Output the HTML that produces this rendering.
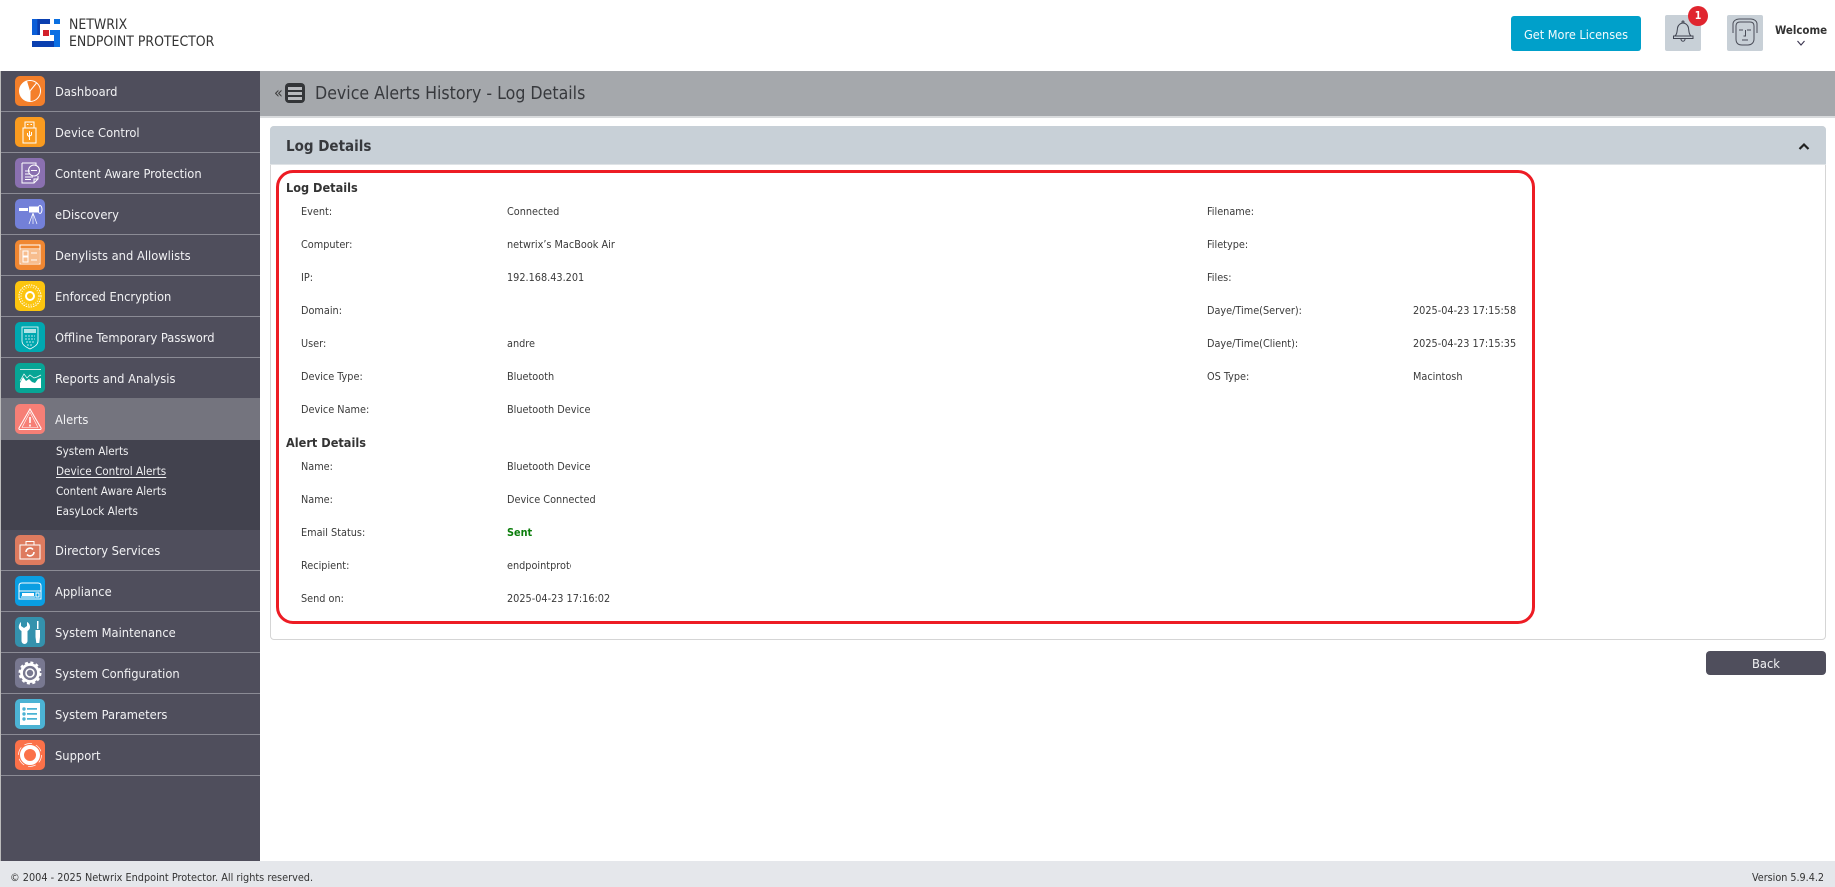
<!DOCTYPE html>
<html lang="en"><head><meta charset="utf-8"><title>Netwrix Endpoint Protector</title>
<style>
*{box-sizing:border-box}
html,body{margin:0;padding:0;width:1835px;height:887px;overflow:hidden;background:#fff;font-family:"DejaVu Sans Condensed","DejaVu Sans","Liberation Sans",sans-serif;font-stretch:condensed;color:#333}
.a{position:absolute;white-space:nowrap}
.sb{position:absolute;left:1px;top:71px;width:259px;height:790px;background:#4f4e5c}
.it{position:absolute;left:1px;width:259px;height:41px;border-bottom:1px solid #8b8b95}
.ic{position:absolute;left:15px;width:30px;height:30px;border-radius:5px}
.ic svg{display:block;width:30px;height:30px;fill:none;stroke:#fff;stroke-width:1}
.lb{position:absolute;left:55px;color:#f2f2f4;font-size:12.8px;line-height:20px;white-space:nowrap}
.sub{position:absolute;left:56px;color:#f0f0f2;font-size:11.6px;line-height:16px;white-space:nowrap}
.k,.v{position:absolute;font-size:10.8px;line-height:14px;color:#3a3a3a;white-space:nowrap}
.h{position:absolute;left:286px;font-size:12.6px;font-weight:bold;line-height:16px;color:#333}
</style></head><body>

<!-- header -->
<svg class="a" style="left:32px;top:19px" width="28" height="28" viewBox="0 0 28 28">
<path fill="#0b5ed7" d="M0 0h8v16H5.300v0H0z"/><path fill="#0a3fb0" d="M5.300 0H18v5H8v11H5.300z"/><path fill="#0a6fe0" d="M22 0h6v5h-6z"/>
<path fill="#d3202a" d="M11 11h6v6h-6z"/><path fill="#0a3fb0" d="M0 22h22v6H0z"/><path fill="#0b6fe3" d="M22 11h6v17h-6zM18 11h4v5h-4z"/></svg>
<div class="a" style="left:69px;top:16px;font-size:13.9px;line-height:18px;color:#333">NETWRIX</div>
<div class="a" style="left:69px;top:33px;font-size:13.9px;line-height:18px;color:#333">ENDPOINT PROTECTOR</div>

<div class="a" style="left:1511px;top:16px;width:130px;height:35px;background:#00a0ca;border-radius:3px;color:#f4fbfd;font-size:12.6px;line-height:37px;text-align:center">Get More Licenses</div>
<div class="a" style="left:1665px;top:15px;width:36px;height:36px;background:#c8d0d7;border-radius:2px">
<svg width="36" height="36" viewBox="0 0 36 36" fill="none" stroke="#3f4350" stroke-width="1"><path d="M10 21c2-2 2-4 2.500-8 .5-3 3-5 5.500-5s5 2 5.500 5c.5 4 .5 6 2.500 8z"/><path d="M8.500 21h19.500v2.500H8.500z"/><path d="M16 24c0 3 4 3 4 0"/><circle cx="18" cy="7" r="1"/></svg></div>
<div class="a" style="left:1688px;top:6px;width:20px;height:20px;border-radius:50%;background:#e0252f;color:#fff;font-size:10.5px;font-weight:bold;line-height:20px;text-align:center">1</div>
<div class="a" style="left:1727px;top:15px;width:36px;height:36px;background:#c8d0d7;border-radius:2px">
<svg width="36" height="36" viewBox="0 0 36 36" fill="none" stroke="#4a4d58" stroke-width="1"><path d="M6 18V9c0-3 3-5 6-5h12c3 0 6 2 6 5v9"/><path d="M9 18V11c0-2 1-4 4-4h10c3 0 4 2 4 4v13c0 4-3 6-6 6h-6c-4 0-6-2-6-6z"/><path d="M12 15h4M20 15h4M18.500 15v6h-2M15 25h6"/></svg></div>
<div class="a" style="left:1775px;top:22px;font-size:11.4px;font-weight:bold;line-height:16px;color:#333">Welcome</div>
<svg class="a" style="left:1796px;top:40px" width="10" height="7" viewBox="0 0 10 7" fill="none" stroke="#3b3550" stroke-width="1.100"><path d="M1.500 1l3.500 4 3.500-4"/></svg>

<!-- sidebar -->
<div class="sb"></div>
<div class="a" style="left:0;top:71px;width:1px;height:790px;background:#bbb"></div>

<div class="it" style="top:71px"></div><div class="it" style="top:112px"></div><div class="it" style="top:153px"></div><div class="it" style="top:194px"></div><div class="it" style="top:235px"></div><div class="it" style="top:276px"></div><div class="it" style="top:317px"></div><div class="it" style="top:358px"></div>
<div class="it" style="top:398px;height:42px;background:#74747e;border:0"></div>
<div class="a" style="left:1px;top:440px;width:259px;height:90px;background:#42424e"></div>
<div class="it" style="top:530px"></div><div class="it" style="top:571px"></div><div class="it" style="top:612px"></div><div class="it" style="top:653px"></div><div class="it" style="top:694px"></div><div class="it" style="top:735px"></div>

<div class="ic" style="top:76px;background:#f47f2a"><svg viewBox="0 0 30 30"><circle cx="15" cy="15" r="10.500"/><path fill="#fff" stroke="none" d="M15 15l-3-10A10.500 10.500 0 0 0 4.500 15c0 5.500 4.500 10.200 10.500 10.500z"/><path d="M15 15l6.500-8M15 15v10"/></svg></div>
<div class="lb" style="top:83px">Dashboard</div>

<div class="ic" style="top:117px;background:#fa9b1f"><svg viewBox="0 0 30 30"><path d="M10 5h9v6h-9zM8 11h13v15H8z"/><path d="M12 7.500h1.500M15.500 7.500h1.500M14.500 14v9M12.500 16v2l2 2M16.500 15v3l-2 1"/></svg></div>
<div class="lb" style="top:124px">Device Control</div>

<div class="ic" style="top:158px;background:#8a70b0"><svg viewBox="0 0 30 30"><path d="M7 5h14v3M7 5v20h12l4-4v-3M19 25v-4h4M10 13h5M10 16h5M10 19h8M10 21.500h6"/><circle cx="19" cy="12.500" r="5.500"/><path d="M16 12.500h6"/></svg></div>
<div class="lb" style="top:165px">Content Aware Protection</div>

<div class="ic" style="top:199px;background:#7380d8"><svg viewBox="0 0 30 30"><path fill="#fff" stroke="none" d="M4 9h9v3H4zM14 7.500h10v6H14z"/><ellipse cx="25" cy="10.500" rx="2" ry="4"/><path d="M18 14l-4 11M18 14v11M18 14l4 11" stroke-width=".7"/></svg></div>
<div class="lb" style="top:206px">eDiscovery</div>

<div class="ic" style="top:240px;background:#f08732"><svg viewBox="0 0 30 30"><path d="M5 5h20v19H5zM5 9h20"/><path fill="#fff" stroke="none" opacity=".45" d="M6 10h18v13H6z"/><path d="M8 11h5v5H8zM8 17h5v5H8zM16 13h6M16 20h6"/></svg></div>
<div class="lb" style="top:247px">Denylists and Allowlists</div>

<div class="ic" style="top:281px;background:#fcc50f"><svg viewBox="0 0 30 30"><circle cx="15" cy="15" r="11" stroke-dasharray="1.500 1" stroke-width="1"/><circle cx="15" cy="15" r="9" stroke-dasharray="1 1.500" stroke-width="1.500" opacity=".7"/><circle cx="15" cy="15" r="4" stroke-width="2"/></svg></div>
<div class="lb" style="top:288px">Enforced Encryption</div>

<div class="ic" style="top:322px;background:#00a8b0"><svg viewBox="0 0 30 30"><path stroke-width=".8" d="M7 5h16v14c0 4-4 6-8 8-4-2-8-4-8-8z"/><path fill="#fff" stroke="none" opacity=".7" d="M9 7h12v4H9z"/><path stroke-dasharray="2 1" opacity=".7" d="M10 14h10M10 17h10M11 20h8M12 23h6"/></svg></div>
<div class="lb" style="top:329px">Offline Temporary Password</div>

<div class="ic" style="top:363px;background:#07a595"><svg viewBox="0 0 30 30"><path d="M5 6.500h21" stroke-width=".7"/><path fill="#fff" stroke="none" d="M5 25v-5l3-6 3 4 3-2 3 3 3 1 3-4 3-1v10z"/><path stroke-width=".7" d="M5 18l4-7 3 4 3-3 4 3 3-1 4-2"/></svg></div>
<div class="lb" style="top:370px">Reports and Analysis</div>

<div class="ic" style="top:404px;background:#f67f76"><svg viewBox="0 0 30 30"><path stroke-width="1" d="M15 5L4 24a1 1 0 0 0 1 1.500h20a1 1 0 0 0 1-1.500z"/><path stroke-width=".6" d="M15 8L7 23.500h16z"/><path stroke-width="1.600" d="M15 13v6M15 20.500v2"/></svg></div>
<div class="lb" style="top:411px">Alerts</div>

<div class="sub" style="top:443px">System Alerts</div>
<div class="sub" style="top:463px;text-decoration:underline;text-underline-offset:2px">Device Control Alerts</div>
<div class="sub" style="top:483px">Content Aware Alerts</div>
<div class="sub" style="top:503px">EasyLock Alerts</div>

<div class="ic" style="top:535px;background:#de7b5f"><svg viewBox="0 0 30 30"><path stroke-width="1" d="M5 10h20v14H5zM11 10V6.500h8V10"/><path stroke-width="1.600" d="M11 17a4 4 0 0 1 7-2.500M19 17a4 4 0 0 1-7 2.500"/></svg></div>
<div class="lb" style="top:542px">Directory Services</div>

<div class="ic" style="top:576px;background:#0a9ee2"><svg viewBox="0 0 30 30"><path stroke-width="1" d="M4 10c0-2 1-3 3-3h16c2 0 3 1 3 3v13H4zM4 15h22"/><path fill="#fff" stroke="none" d="M7 17h12v3H7z"/><path d="M21 17h3v4h-3zM6 21h14"/></svg></div>
<div class="lb" style="top:583px">Appliance</div>

<div class="ic" style="top:617px;background:#3492ad"><svg viewBox="0 0 30 30"><path fill="#fff" stroke="none" d="M6 5v4l3 2 3-2V5c2 1 3 3 3 5s-1 3-2.500 4v10a3 3 0 0 1-6 0V14C5 13 3.800 12 3.800 10S5 6 6 5z"/><path fill="#fff" stroke="none" d="M22 4h1.500v8H22zM20.500 13h4.500v7l-.7 6h-3l-.8-6z"/></svg></div>
<div class="lb" style="top:624px">System Maintenance</div>

<div class="ic" style="top:658px;background:#787890"><svg viewBox="0 0 30 30"><circle cx="15" cy="15" r="8.500" stroke-width="2.800"/><circle cx="15" cy="15" r="10.500" stroke-width="2" stroke-dasharray="3 2.500"/><circle cx="15" cy="15" r="4" stroke-width="1.600"/></svg></div>
<div class="lb" style="top:665px">System Configuration</div>

<div class="ic" style="top:699px;background:#4cb3d4"><svg viewBox="0 0 30 30"><path fill="#fff" stroke="none" d="M5 4h20v22H5z"/><g fill="#4cb3d4" stroke="none"><circle cx="9" cy="10" r="1.700"/><circle cx="9" cy="15" r="1.700"/><circle cx="9" cy="20" r="1.700"/><path d="M12 9h10v1.800H12zM12 14h10v1.800H12zM12 19h10v1.800H12z"/></g></svg></div>
<div class="lb" style="top:706px">System Parameters</div>

<div class="ic" style="top:740px;background:#fb7149"><svg viewBox="0 0 30 30"><circle cx="15" cy="15" r="8" stroke-width="4"/><circle cx="15" cy="15" r="11.500" stroke-width=".7" stroke-dasharray="8 4"/></svg></div>
<div class="lb" style="top:747px">Support</div>

<!-- title bar -->
<div class="a" style="left:260px;top:71px;width:1575px;height:47px;background:#a5a8ac;border-bottom:2px solid #d9dbdd"></div>
<div class="a" style="left:274px;top:84px;font-size:16px;line-height:18px;color:#3d3d3d">«</div>
<div class="a" style="left:285px;top:83px;width:20px;height:20px;border-radius:4px;background:#333538"></div>
<div class="a" style="left:288px;top:87px;width:14px;height:2.500px;background:#b8babd"></div>
<div class="a" style="left:288px;top:92px;width:14px;height:2.500px;background:#b8babd"></div>
<div class="a" style="left:288px;top:97px;width:14px;height:2.500px;background:#b8babd"></div>
<div class="a" style="left:315px;top:83px;font-size:17.6px;line-height:22px;color:#37393d">Device Alerts History - Log Details</div>

<!-- panel -->
<div class="a" style="left:270px;top:126px;width:1556px;height:514px;border:1px solid #d5d5d5;border-radius:4px;background:#fff"></div>
<div class="a" style="left:270px;top:126px;width:1556px;height:39px;background:#c8d0d7;border-bottom:1px solid #dfe3e6;border-radius:4px 4px 0 0"></div>
<div class="a" style="left:286px;top:136px;font-size:15px;font-weight:bold;line-height:20px;color:#37393d">Log Details</div>
<svg class="a" style="left:1798px;top:142px" width="12" height="9" viewBox="0 0 12 9" fill="none" stroke="#222" stroke-width="2.200"><path d="M1.500 7l4.500-4.500 4.500 4.500"/></svg>

<!-- annotation -->
<div class="a" style="left:276px;top:170px;width:1259px;height:454px;border:3px solid #ed1c24;border-radius:17px"></div>

<div class="h" style="top:180px">Log Details</div>
<div class="k" style="left:301px;top:205px">Event:</div><div class="v" style="left:507px;top:205px">Connected</div>
<div class="k" style="left:301px;top:238px">Computer:</div><div class="v" style="left:507px;top:238px">netwrix’s MacBook Air</div>
<div class="k" style="left:301px;top:271px">IP:</div><div class="v" style="left:507px;top:271px">192.168.43.201</div>
<div class="k" style="left:301px;top:304px">Domain:</div>
<div class="k" style="left:301px;top:337px">User:</div><div class="v" style="left:507px;top:337px">andre</div>
<div class="k" style="left:301px;top:370px">Device Type:</div><div class="v" style="left:507px;top:370px">Bluetooth</div>
<div class="k" style="left:301px;top:403px">Device Name:</div><div class="v" style="left:507px;top:403px">Bluetooth Device</div>

<div class="k" style="left:1207px;top:205px">Filename:</div>
<div class="k" style="left:1207px;top:238px">Filetype:</div>
<div class="k" style="left:1207px;top:271px">Files:</div>
<div class="k" style="left:1207px;top:304px">Daye/Time(Server):</div><div class="v" style="left:1413px;top:304px">2025-04-23 17:15:58</div>
<div class="k" style="left:1207px;top:337px">Daye/Time(Client):</div><div class="v" style="left:1413px;top:337px">2025-04-23 17:15:35</div>
<div class="k" style="left:1207px;top:370px">OS Type:</div><div class="v" style="left:1413px;top:370px">Macintosh</div>

<div class="h" style="top:435px">Alert Details</div>
<div class="k" style="left:301px;top:460px">Name:</div><div class="v" style="left:507px;top:460px">Bluetooth Device</div>
<div class="k" style="left:301px;top:493px">Name:</div><div class="v" style="left:507px;top:493px">Device Connected</div>
<div class="k" style="left:301px;top:526px">Email Status:</div><div class="v" style="left:507px;top:526px;color:#0a7d0a;font-weight:bold">Sent</div>
<div class="k" style="left:301px;top:559px">Recipient:</div><div class="v" style="left:507px;top:559px;width:64px;overflow:hidden">endpointprotector@netwrix.com</div>
<div class="k" style="left:301px;top:592px">Send on:</div><div class="v" style="left:507px;top:592px">2025-04-23 17:16:02</div>

<div class="a" style="left:1706px;top:651px;width:120px;height:24px;background:#4f4e5c;border-radius:4px;color:#f2f2f4;font-size:12.8px;line-height:28px;text-align:center">Back</div>

<!-- footer -->
<div class="a" style="left:0;top:861px;width:1835px;height:26px;background:#e5e7eb"></div>
<div class="a" style="left:10px;top:870px;font-size:10.8px;line-height:16px;color:#333">© 2004 - 2025 Netwrix Endpoint Protector. All rights reserved.</div>
<div class="a" style="right:11px;top:870px;font-size:10.7px;line-height:16px;color:#333">Version 5.9.4.2</div>
</body></html>
